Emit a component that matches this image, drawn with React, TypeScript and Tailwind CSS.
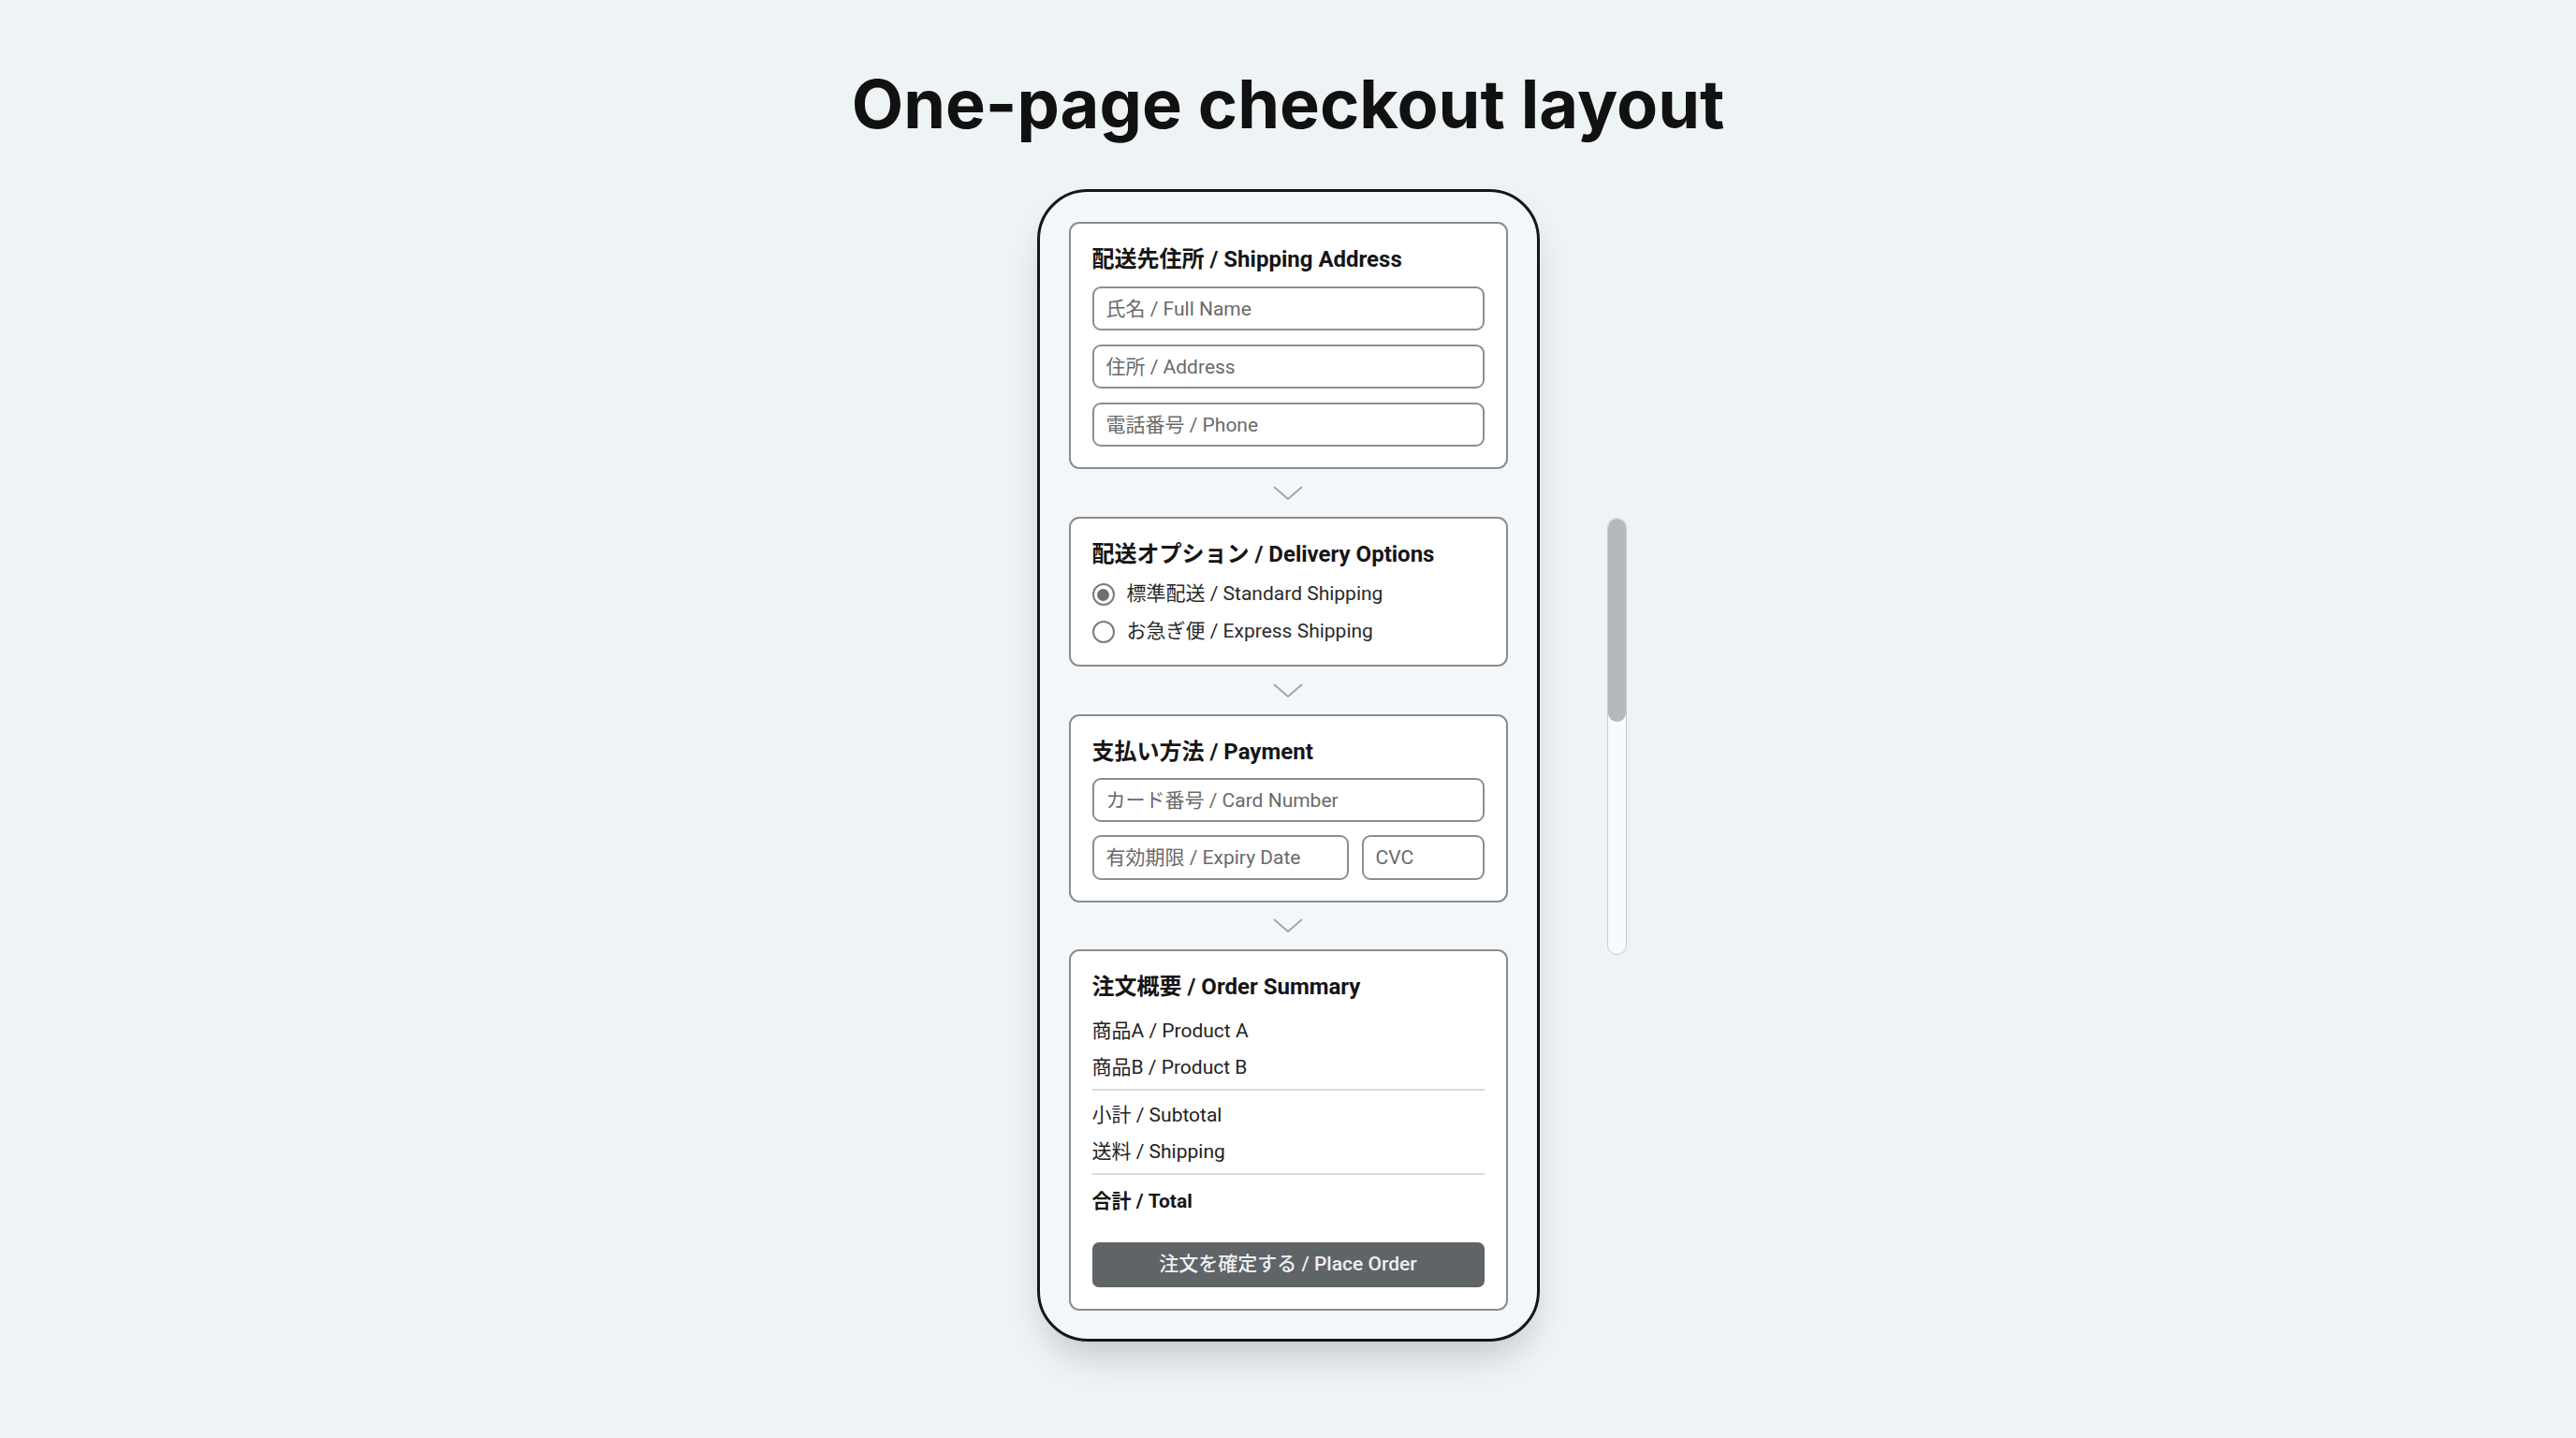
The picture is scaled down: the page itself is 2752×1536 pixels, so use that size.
import React from "react";

const ChevronIcon = () => (
  <svg width="32" height="16" viewBox="0 0 32 16" fill="none">
    <polyline points="1.5,1.5 16,14 30.5,1.5" stroke="#a3a7aa" strokeWidth="2" strokeLinecap="round" strokeLinejoin="round" />
  </svg>
);

const Field = ({ placeholder, className = "" }: { placeholder: string; className?: string }) => (
  <input
    readOnly
    placeholder={placeholder}
    className={`h-[47px] border-2 border-[#8e8e8e] rounded-[9px] bg-white pl-[13px] text-[21px] text-[#333] placeholder:text-[#6a6a6a] outline-none ${className}`}
  />
);

const Radio = ({ checked, label }: { checked?: boolean; label: string }) => (
  <label className="h-[30px] flex items-center gap-[13px] text-[21px] text-[#2a2a2a]">
    <span className="w-[24px] h-[24px] rounded-full border-2 border-[#7c7c7c] flex items-center justify-center bg-white">
      {checked && <span className="w-[13px] h-[13px] rounded-full bg-[#6f6f6f]" />}
    </span>
    {label}
  </label>
);

const Card = ({ title, children, className = "" }: { title: string; children: React.ReactNode; className?: string }) => (
  <section className={`bg-white border-2 border-[#8c8c8c] rounded-[11px] px-[23px] pt-[23px] ${className}`}>
    <h2 className="text-[24px] leading-[30px] font-bold text-[#151515]">{title}</h2>
    {children}
  </section>
);

const Row = ({ children, bold }: { children: React.ReactNode; bold?: boolean }) => (
  <div className={`h-[30px] leading-[30px] text-[21px] ${bold ? "font-bold text-[#151515]" : "text-[#232323]"}`}>{children}</div>
);

export default function App() {
  return (
    <div className="min-h-screen bg-[#eef3f6] flex flex-col items-center font-['Roboto','Noto_Sans_CJK_JP',sans-serif]">
      <h1 className="pt-[75px] font-['Inter',sans-serif] text-[72px] leading-none font-bold text-[#111]">One-page checkout layout</h1>

      <div className="mt-[55px] w-full grid grid-cols-[1fr_auto_1fr]">
        <div />

        {/* phone frame */}
        <div className="w-[537px] border-[3px] border-[#161616] rounded-[54px] bg-[#f4f7f9] px-[31px] pt-[32px] pb-[30px] shadow-[0_22px_40px_-10px_rgba(0,0,0,0.2)]">
          <Card title="配送先住所 / Shipping Address" className="pb-[22px]">
            <div className="mt-[14px] flex flex-col gap-[15px]">
              <Field placeholder="氏名 / Full Name" />
              <Field placeholder="住所 / Address" />
              <Field placeholder="電話番号 / Phone" />
            </div>
          </Card>

          <div className="h-[51px] flex items-center justify-center">
            <ChevronIcon />
          </div>

          <Card title="配送オプション / Delivery Options" className="pb-[20px]">
            <div className="mt-[13px] flex flex-col gap-[10px]">
              <Radio checked label="標準配送 / Standard Shipping" />
              <Radio label="お急ぎ便 / Express Shipping" />
            </div>
          </Card>

          <div className="h-[51px] flex items-center justify-center">
            <ChevronIcon />
          </div>

          <Card title="支払い方法 / Payment" className="pb-[22px]">
            <div className="mt-[13px] flex flex-col gap-[14px]">
              <Field placeholder="カード番号 / Card Number" />
              <div className="flex gap-[14px]">
                <Field placeholder="有効期限 / Expiry Date" className="flex-1 min-w-0 h-[48px]" />
                <Field placeholder="CVC" className="w-[131px] h-[48px]" />
              </div>
            </div>
          </Card>

          <div className="h-[50px] flex items-center justify-center">
            <ChevronIcon />
          </div>

          <Card title="注文概要 / Order Summary" className="pb-[23px]">
            <div className="mt-[17px] flex flex-col gap-[9px]">
              <Row>商品A / Product A</Row>
              <Row>商品B / Product B</Row>
            </div>
            <div className="mt-[8px] h-[2px] bg-[#dadada]" />
            <div className="mt-[11px] flex flex-col gap-[9px]">
              <Row>小計 / Subtotal</Row>
              <Row>送料 / Shipping</Row>
            </div>
            <div className="mt-[8px] h-[2px] bg-[#dadada]" />
            <div className="mt-[13px]">
              <Row bold>合計 / Total</Row>
            </div>
            <button className="mt-[29px] w-full h-[48px] rounded-[7px] bg-[#5f6467] text-[21px] font-medium text-[#eef0f1]">
              注文を確定する / Place Order
            </button>
          </Card>
        </div>

        {/* scroll indicator */}
        <div className="pl-[72px] pt-[351px]">
          <div className="w-[21px] h-[467px] rounded-full border-[1.5px] border-[#c9ccce] bg-[#f9fafb] overflow-hidden">
            <div className="h-[217px] rounded-full bg-[#b5b9bb]" />
          </div>
        </div>
      </div>
    </div>
  );
}
